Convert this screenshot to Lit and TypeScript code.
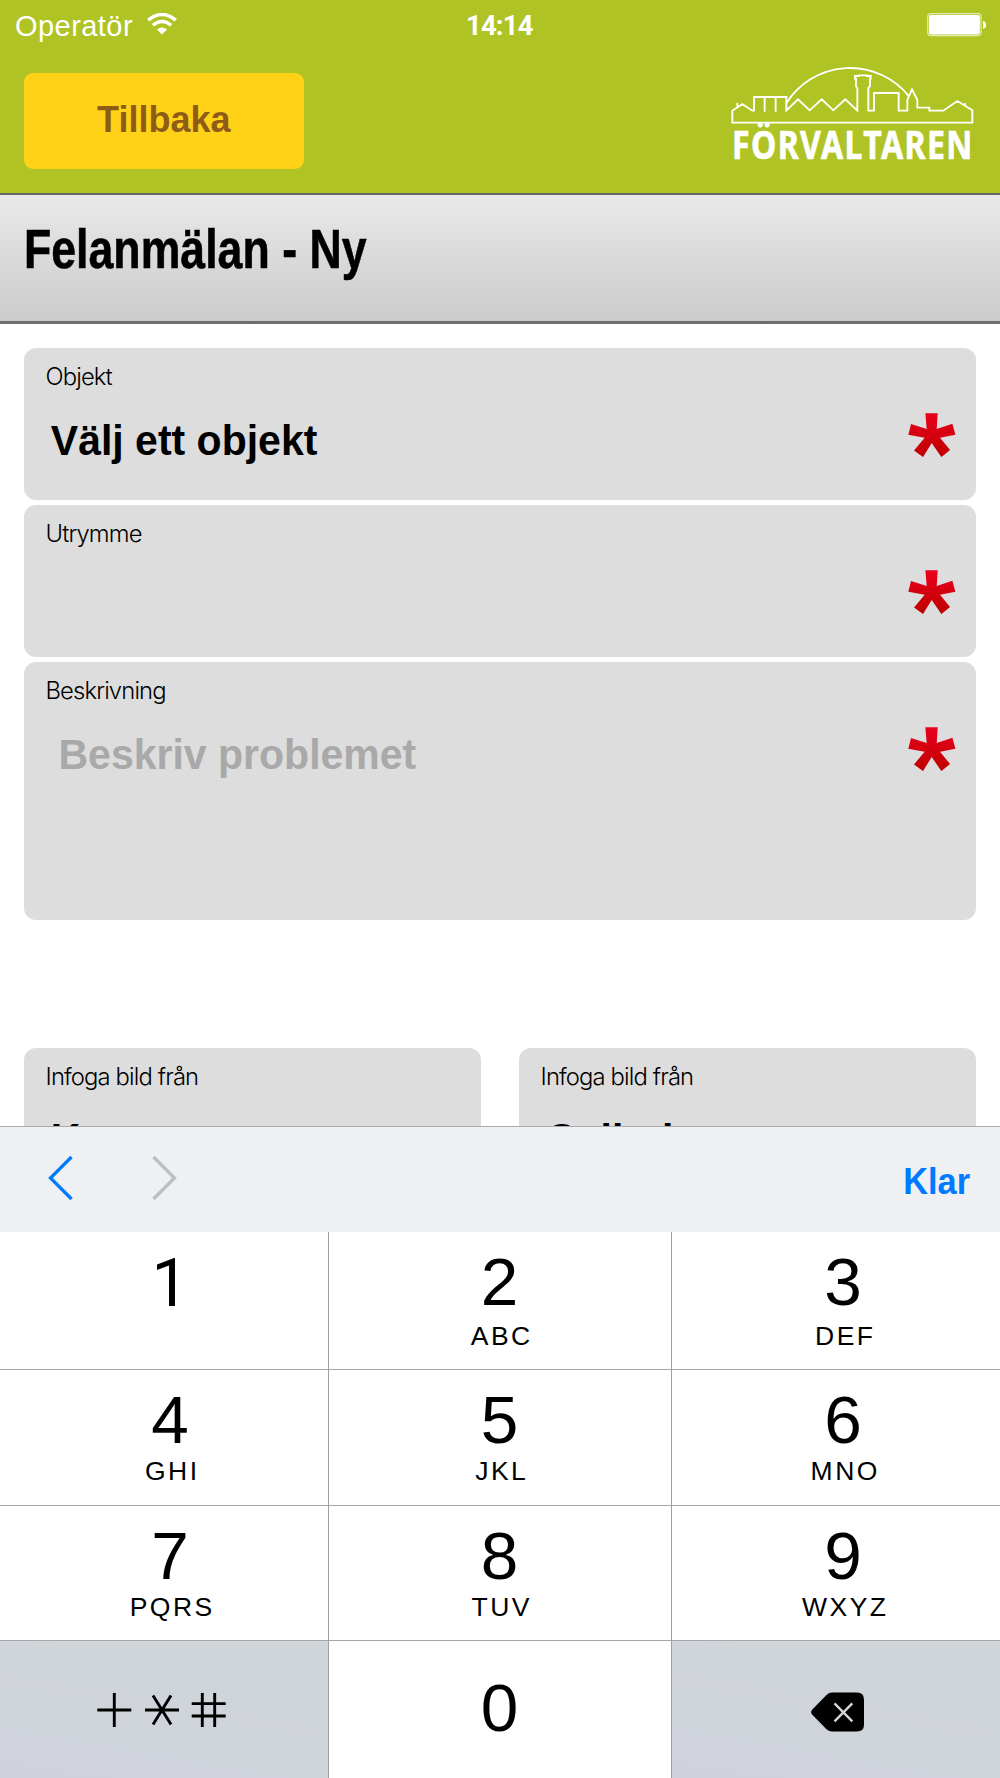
import { LitElement, html, css, nothing } from "lit";
import { customElement, property } from "lit/decorators.js";

@customElement("status-bar")
class StatusBar extends LitElement {
  static styles = css`
    :host { display: grid; grid-template-columns: 1fr auto 1fr; height: 52px; color: #fff;
      font-family: "Liberation Sans", Arial, sans-serif; font-size: 29px; line-height: 32px; padding: 10px 14px 0 15px; box-sizing: border-box; }
    .carrier { display: flex; }
    .name { letter-spacing: 0.45px; }
    .wifi { margin: 3px 0 0 14px; }
    .time { font-family: Roboto, "Liberation Sans", sans-serif; font-weight: 700; font-size: 28.5px; display: inline-block;
      letter-spacing: -0.8px; transform: scaleX(0.96); transform-origin: 0 0; margin-top: -0.5px; }
    .battery { justify-self: end; margin-top: 3px; }
    svg { display: block; }
  `;
  render() {
    return html`
      <div class="carrier">
        <span class="name">Operatör</span>
        <svg class="wifi" width="30" height="22" viewBox="0 0 30 22" fill="none" stroke="#fff">
          <path d="M1.2 7.2Q15-4.2 28.8 7.2" stroke-width="3.6" />
          <path d="M5.8 12.2Q15 4.6 24.2 12.2" stroke-width="3.4" />
          <path d="M10 16.6Q15 12.4 20 16.6L15 21.6Z" fill="#fff" stroke="none" />
        </svg>
      </div>
      <span class="time">14:14</span>
      <svg class="battery" width="59" height="24" viewBox="0 0 59 24">
        <rect x="0.7" y="0.7" width="53.4" height="22" rx="3.5" fill="none" stroke="#fff" stroke-opacity=".65" stroke-width="1.2" />
        <rect x="1.9" y="1.9" width="51" height="19.6" rx="2.5" fill="#fff" />
        <path d="M56 7.8Q59.2 8.8 59.2 12T56 16Z" fill="#fff" />
      </svg>
    `;
  }
}

@customElement("brand-logo")
class BrandLogo extends LitElement {
  static styles = css`
    :host { display: block; }
    svg { display: block; overflow: visible; }
    .word { font-family: "Noto Sans", "Open Sans", sans-serif; font-weight: 700; font-size: 116px; letter-spacing: 5px; fill: #fff; }
  `;
  render() {
    return html`
      <svg width="244" height="110" viewBox="94 201 732 330" fill="none" stroke="#fff" stroke-width="5.5">
        <path d="M98 368H818V331L773 303L731 332H689V323H653V300L637 268L623 300V332H597V279H523V332H506V263L511 259V236H513V228H502V226H477V228H466V236H469V259L473 264V332L437 298L401 331L366 298L330 331L295 298L260 332V291H163V332H158L128 312L98 332Z" />
        <path d="M195 291V335M228 291V335M261 308A226 226 0 0 1 628 289M113 320V309M796 318V309" />
        <text class="word" stroke="#fff" stroke-width="2" x="97" y="478" textLength="725" lengthAdjust="spacingAndGlyphs">FÖRVALTAREN</text>
      </svg>
    `;
  }
}

@customElement("form-card")
class FormCard extends LitElement {
  @property() label = "";
  @property() value = "";
  @property() placeholder = "";
  @property({ type: Boolean }) required = false;

  static styles = css`
    :host { display: flex; justify-content: space-between; box-sizing: border-box; background: #ddd; border-radius: 12px;
      padding: 15px 20.5px 0 21.5px; overflow: hidden; }
    .text { display: flex; flex-direction: column; gap: 27px; }
    .label { font-family: Inter, "Liberation Sans", sans-serif; font-weight: 300; font-size: 23.8px; line-height: 28px;
      letter-spacing: -0.85px; color: #000; white-space: nowrap; }
    .value { font-family: "Liberation Sans", Arial, sans-serif; font-weight: bold; font-size: 41px; line-height: 46px;
      color: #000; padding-left: 5.3px; transform: scaleY(1.03); transform-origin: 0 37px; white-space: nowrap; }
    .ghost { color: #a9a9a9; padding-left: 13px; }
    .star { margin-top: 50px; display: block; flex: none; }
    :host([tall]) .value { transform: scaleY(1.075); }
  `;
  render() {
    return html`
      <div class="text">
        <span class="label">${this.label}</span>
        ${this.value ? html`<span class="value">${this.value}</span>` : nothing}
        ${this.placeholder ? html`<span class="value ghost">${this.placeholder}</span>` : nothing}
      </div>
      ${this.required
        ? html`<svg class="star" width="47.4" height="44.4" viewBox="0 0 142 133">
            <defs><linearGradient id="red" x1="0" y1="0" x2="0" y2="1">
              <stop offset="0" stop-color="#ea001e" /><stop offset="1" stop-color="#be0000" />
            </linearGradient></defs>
            <path fill="url(#red)" d="M52 1H89L86 48L133 32L142 65L96 74L126 111L100 132L71 90L45 132L18 112L50 74L1 65L9 33L56 48Z" />
          </svg>`
        : nothing}
    `;
  }
}

const KEY_ROWS = [
  [["1", ""], ["2", "ABC"], ["3", "DEF"]],
  [["4", "GHI"], ["5", "JKL"], ["6", "MNO"]],
  [["7", "PQRS"], ["8", "TUV"], ["9", "WXYZ"]],
];

@customElement("number-pad")
class NumberPad extends LitElement {
  static styles = css`
    :host { display: block; font-family: "Liberation Sans", Arial, sans-serif; color: #000; }
    .bar { height: 106px; box-sizing: border-box; border-top: 1.5px solid #a9abae; background: #eff0f2;
      display: flex; align-items: flex-start; padding: 28px 29.5px 0 48px; }
    .bar svg { display: block; }
    .next { margin-left: 76px; }
    .done { margin: 5.5px 0 0 auto; color: #007aff; font-weight: bold; font-size: 36.5px; line-height: 42px;
      transform: scaleX(0.94); transform-origin: 100% 0; }
    .grid { display: grid; grid-template-columns: 329px 343px 328px; grid-template-rows: 138px 136px 135px 137px; }
    .key { box-sizing: border-box; border-right: 1px solid #a0a0a0; border-bottom: 1px solid #a6a6a6; background: #fff;
      display: flex; flex-direction: column; align-items: center; padding-top: 12px; }
    .key:nth-child(3n) { border-right: 0; padding-left: 14px; }
    .key:nth-child(3n + 1) { padding-left: 12px; }
    .key:nth-child(3n + 2) { padding-right: 1px; }
    .key:nth-child(n + 10) { border-bottom: 0; }
    .digit { font-size: 67.5px; line-height: 76px; height: 76px; }
    .one { font-family: Roboto, "Liberation Sans", sans-serif; font-size: 66px; padding-top: 2px; }
    .letters { font-size: 26.5px; line-height: 30px; letter-spacing: 2.5px; margin: -2.5px 0 0 4.5px; }
    .first .letters { margin-top: 0.5px; }
    .key.zero { padding-top: 28.5px; }
    .key.fn { background: linear-gradient(190deg, #cfd5d9 20%, #d0d3dc 90%); align-items: flex-start; }
    .key.symbols { padding: 51px 0 0 96px; }
    .key.erase { padding: 51px 0 0 138px; }
    .key svg { display: block; }
  `;
  render() {
    return html`
      <div class="bar">
        <svg width="28" height="46" viewBox="48 1155 28 46" fill="none" stroke="#007aff" stroke-width="3.3">
          <path d="M71.5 1157L50.5 1178L71.5 1199" />
        </svg>
        <svg class="next" width="28" height="46" viewBox="152 1155 28 46" fill="none" stroke="#bdbec0" stroke-width="3.3">
          <path d="M153.5 1157L174.5 1178L153.5 1199" />
        </svg>
        <span class="done">Klar</span>
      </div>
      <div class="grid">
        ${KEY_ROWS.map((row, i) =>
          row.map(([digit, letters]) => html`
            <div class="key ${i === 0 ? "first" : ""}">
              <span class="digit ${digit === "1" ? "one" : ""}">${digit}</span>
              ${letters ? html`<span class="letters">${letters}</span>` : nothing}
            </div>`)
        )}
        <div class="key fn symbols">
          <svg width="132" height="36" viewBox="96 1692 132 36" fill="none" stroke="#000" stroke-width="2.9">
            <path d="M97.3 1710H131.3M114.3 1693V1727M145 1710H179M153 1695.5L171 1724.5M171 1695.5L153 1724.5M191.7 1703.6H225.7M191.7 1716H225.7M202.3 1693V1727M214.7 1693V1727" />
          </svg>
        </div>
        <div class="key zero"><span class="digit">0</span></div>
        <div class="key fn erase">
          <svg width="55" height="40" viewBox="810 1692 55 40">
            <path d="M832 1692.6H857Q864 1692.6 864 1699.6V1724.6Q864 1731.6 857 1731.6H832Q829 1731.6 826.5 1729.3L812.3 1714.8Q810 1712.1 812.3 1709.4L826.5 1694.9Q829 1692.6 832 1692.6Z" />
            <path d="M834.5 1703.3L852.3 1721.3M852.3 1703.3L834.5 1721.3" stroke="#d2d5d9" stroke-width="2.4" />
          </svg>
        </div>
      </div>
    `;
  }
}

@customElement("app-root")
class AppRoot extends LitElement {
  static styles = css`
    :host { display: flex; flex-direction: column; width: 1000px; height: 1778px; background: #fff; overflow: hidden;
      font-family: "Liberation Sans", Arial, sans-serif; }
    header { background: #afc424; height: 193px; flex: none; }
    .brand { display: flex; justify-content: space-between; padding: 0 25.5px 0 24px; align-items: flex-start; }
    .back { display: flex; justify-content: center; box-sizing: border-box; width: 279.5px; height: 96.5px; margin-top: 20.5px;
      border: 0; border-radius: 9px; background: #ffd218; color: #8f5c18; font: bold 36px/40px "Liberation Sans", Arial, sans-serif;
      padding: 27.5px 0 0; }
    .back span { display: block; height: 40px; transform: scaleY(1.04); transform-origin: 0 32px; }
    .brand brand-logo { margin-top: 15px; }
    .title { flex: none; height: 131px; box-sizing: border-box; border-top: 2px solid #64656a; border-bottom: 3px solid #6e6e6e;
      background: linear-gradient(#e9e9e9, #cbcbcb); padding: 23px 0 0 23.5px; }
    h1 { margin: 0; font-size: 55px; line-height: 62px; font-weight: bold; white-space: nowrap; transform: scaleX(0.812);
      transform-origin: 0 0; -webkit-text-stroke: 0.6px #000; }
    main { flex: 1; min-height: 0; overflow: hidden; padding: 24px 24px 0; display: flex; flex-direction: column; gap: 5px; }
    .row { height: 152px; flex: none; }
    .tall { height: 258px; flex: none; }
    .pair { display: grid; grid-template-columns: 1fr 1fr; gap: 38px; margin-top: 123px; flex: none; height: 152px; }
    number-pad { flex: none; }
  `;
  render() {
    return html`
      <header>
        <status-bar></status-bar>
        <div class="brand">
          <button class="back"><span>Tillbaka</span></button>
          <brand-logo></brand-logo>
        </div>
      </header>
      <div class="title"><h1>Felanmälan - Ny</h1></div>
      <main>
        <form-card class="row" label="Objekt" value="Välj ett objekt" required></form-card>
        <form-card class="row" label="Utrymme" required></form-card>
        <form-card class="tall" label="Beskrivning" placeholder="Beskriv problemet" required></form-card>
        <div class="pair">
          <form-card tall label="Infoga bild från" value="Kamera"></form-card>
          <form-card tall label="Infoga bild från" value="Galleri"></form-card>
        </div>
      </main>
      <number-pad></number-pad>
    `;
  }
}
